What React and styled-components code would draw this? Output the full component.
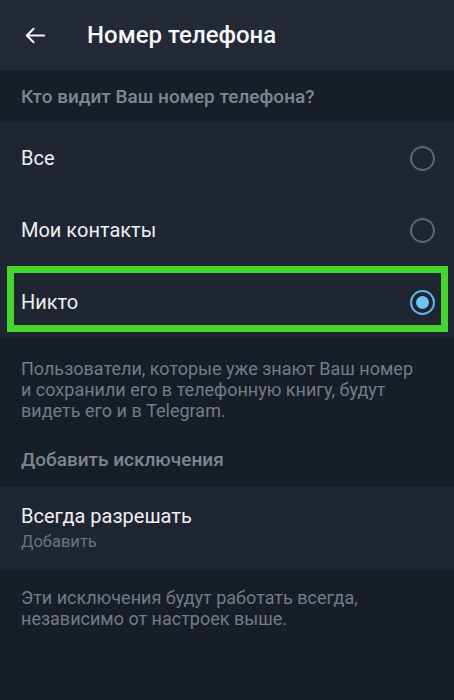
import React from "react";
import styled, { createGlobalStyle } from "styled-components";

const Global = createGlobalStyle`
  html, body { margin: 0; padding: 0; background: #181e28; }
  body { font-family: Roboto, "Noto Sans", sans-serif; -webkit-font-smoothing: antialiased; }
  * { box-sizing: border-box; }
`;

const Page = styled.div`
  width: 454px;
  min-height: 700px;
  background: #181e28;
  display: flex;
  flex-direction: column;
`;

const Header = styled.header`
  height: 70px;
  background: #232a36;
  display: flex;
  align-items: center;
  padding-left: 24px;
  gap: 40px;
`;

const BackButton = styled.button`
  width: 23px;
  height: 23px;
  padding: 0;
  border: none;
  background: none;
  color: #f2f4f7;
  display: flex;
  align-items: center;
  justify-content: center;
`;

const Title = styled.h1`
  margin: 0;
  font-size: 24px;
  font-weight: 500;
  color: #f4f6f8;
`;

const SectionHeader = styled.div`
  height: ${(p) => p.$h || 52}px;
  padding: ${(p) => p.$pt || 0}px 21px 0;
  display: flex;
  align-items: center;
  font-size: 19px;
  font-weight: 500;
  color: #7e8691;
`;

const List = styled.div`
  background: #1f2632;
  display: flex;
  flex-direction: column;
`;

const Row = styled.label`
  position: relative;
  height: 72px;
  display: flex;
  align-items: center;
  justify-content: space-between;
  padding: 0 19px 0 21px;
  font-size: 20px;
  color: #eef0f3;
`;

const Radio = styled.span`
  width: 25px;
  height: 25px;
  border-radius: 50%;
  border: 2px solid ${(p) => (p.$checked ? "#5fb6ea" : "#5a6471")};
  display: flex;
  align-items: center;
  justify-content: center;
  &::after {
    content: "";
    display: ${(p) => (p.$checked ? "block" : "none")};
    width: 13px;
    height: 13px;
    border-radius: 50%;
    background: #6cc4f5;
  }
`;

const Highlight = styled.span`
  position: absolute;
  left: 7px;
  right: 6px;
  top: 0;
  height: 66px;
  border: 7px solid #45d52e;
  pointer-events: none;
`;

const Info = styled.p`
  margin: 0;
  padding: ${(p) => p.$pad || "20px 21px 0"};
  font-size: 18px;
  line-height: 21px;
  color: #737b86;
`;

const Block = styled.div`
  height: 83px;
  background: #1f2632;
  display: flex;
  flex-direction: column;
  justify-content: center;
  padding: 0 21px;
  gap: 4px;
`;

const BlockTitle = styled.div`
  font-size: 20px;
  color: #eef0f3;
  line-height: 23px;
`;

const BlockSub = styled.div`
  font-size: 16.5px;
  color: #6a727d;
  line-height: 20px;
`;

const options = [
  { label: "Все", checked: false },
  { label: "Мои контакты", checked: false },
  { label: "Никто", checked: true, highlight: true },
];

export default function App() {
  return (
    <Page>
      <Global />
      <Header>
        <BackButton aria-label="Назад">
          <svg width="23" height="23" viewBox="0 0 24 24" fill="none" stroke="currentColor" strokeWidth="2.2" strokeLinecap="round" strokeLinejoin="round">
            <path d="M21 12H3" />
            <path d="M10 5l-7 7 7 7" />
          </svg>
        </BackButton>
        <Title>Номер телефона</Title>
      </Header>
      <SectionHeader>Кто видит Ваш номер телефона?</SectionHeader>
      <List>
        {options.map((o) => (
          <Row key={o.label}>
            {o.highlight && <Highlight />}
            <span>{o.label}</span>
            <Radio $checked={o.checked} />
          </Row>
        ))}
      </List>
      <Info>
        Пользователи, которые уже знают Ваш номер
        <br />
        и сохранили его в телефонную книгу, будут
        <br />
        видеть его и в Telegram.
      </Info>
      <SectionHeader $h={66} $pt={10}>Добавить исключения</SectionHeader>
      <Block>
        <BlockTitle>Всегда разрешать</BlockTitle>
        <BlockSub>Добавить</BlockSub>
      </Block>
      <Info $pad="17px 21px 0">
        Эти исключения будут работать всегда,
        <br />
        независимо от настроек выше.
      </Info>
    </Page>
  );
}
